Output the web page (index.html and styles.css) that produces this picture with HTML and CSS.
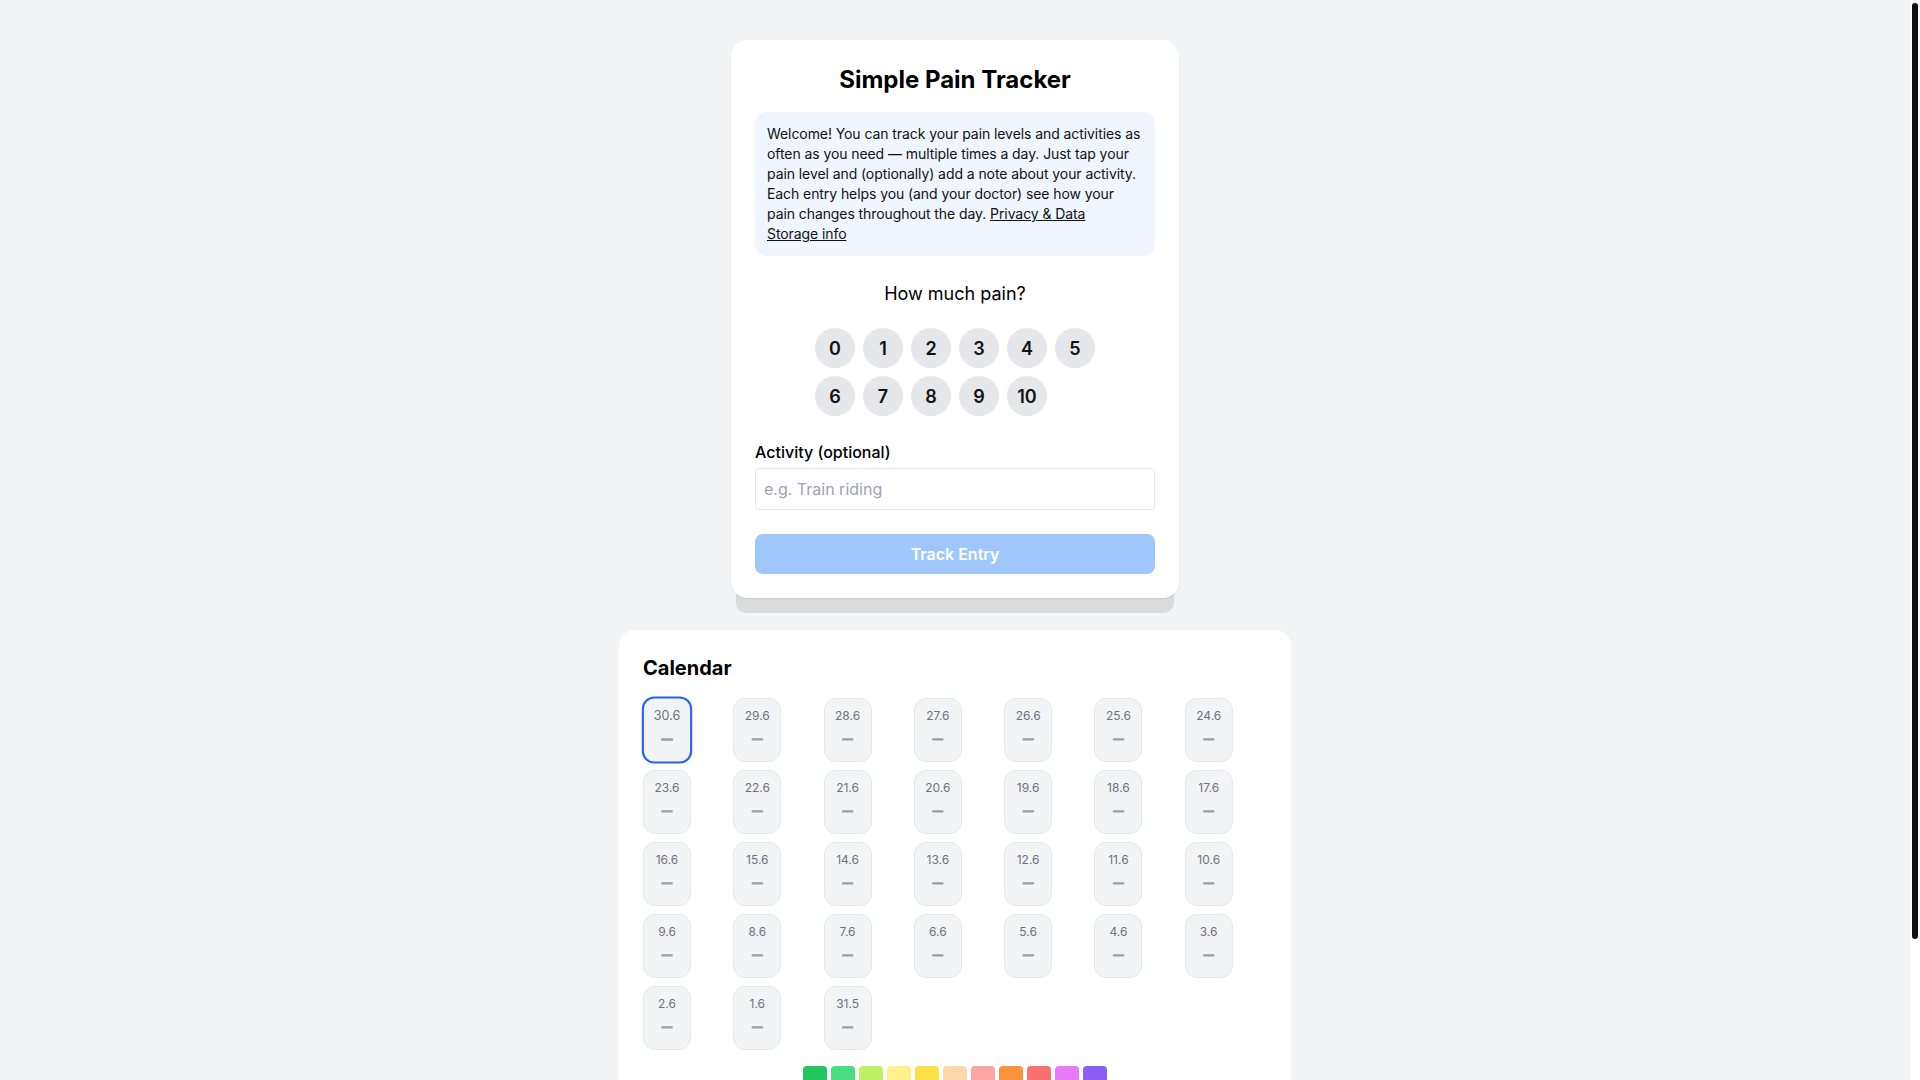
FILE: index.html
```html
<!DOCTYPE html>
<html lang="en">
<head>
<meta charset="utf-8">
<title>Simple Pain Tracker</title>
<link rel="stylesheet" href="styles.css">
</head>
<body>
<main class="page">
  <div class="stack">
    <section class="card tracker">
      <h1 class="title">Simple Pain Tracker</h1>
      <p class="info">Welcome! You can track your pain levels and activities as often as you need — multiple times a day. Just tap your pain level and (optionally) add a note about your activity. Each entry helps you (and your doctor) see how your pain changes throughout the day. <a href="#" class="info-link">Privacy &amp; Data<br>Storage info</a></p>
      <h2 class="question">How much pain?</h2>
      <div class="levels">
        <button class="level">0</button>
        <button class="level">1</button>
        <button class="level">2</button>
        <button class="level">3</button>
        <button class="level">4</button>
        <button class="level">5</button>
        <button class="level">6</button>
        <button class="level">7</button>
        <button class="level">8</button>
        <button class="level">9</button>
        <button class="level">10</button>
      </div>
      <label class="label" for="activity">Activity (optional)</label>
      <input class="input" id="activity" type="text" placeholder="e.g. Train riding">
      <button class="track" disabled>Track Entry</button>
    </section>
  </div>

  <section class="card calendar">
    <h2 class="cal-title">Calendar</h2>
    <div class="cal-grid">
      <div class="day selected"><span class="date">30.6</span><span class="dash">—</span></div>
      <div class="day"><span class="date">29.6</span><span class="dash">—</span></div>
      <div class="day"><span class="date">28.6</span><span class="dash">—</span></div>
      <div class="day"><span class="date">27.6</span><span class="dash">—</span></div>
      <div class="day"><span class="date">26.6</span><span class="dash">—</span></div>
      <div class="day"><span class="date">25.6</span><span class="dash">—</span></div>
      <div class="day"><span class="date">24.6</span><span class="dash">—</span></div>
      <div class="day"><span class="date">23.6</span><span class="dash">—</span></div>
      <div class="day"><span class="date">22.6</span><span class="dash">—</span></div>
      <div class="day"><span class="date">21.6</span><span class="dash">—</span></div>
      <div class="day"><span class="date">20.6</span><span class="dash">—</span></div>
      <div class="day"><span class="date">19.6</span><span class="dash">—</span></div>
      <div class="day"><span class="date">18.6</span><span class="dash">—</span></div>
      <div class="day"><span class="date">17.6</span><span class="dash">—</span></div>
      <div class="day"><span class="date">16.6</span><span class="dash">—</span></div>
      <div class="day"><span class="date">15.6</span><span class="dash">—</span></div>
      <div class="day"><span class="date">14.6</span><span class="dash">—</span></div>
      <div class="day"><span class="date">13.6</span><span class="dash">—</span></div>
      <div class="day"><span class="date">12.6</span><span class="dash">—</span></div>
      <div class="day"><span class="date">11.6</span><span class="dash">—</span></div>
      <div class="day"><span class="date">10.6</span><span class="dash">—</span></div>
      <div class="day"><span class="date">9.6</span><span class="dash">—</span></div>
      <div class="day"><span class="date">8.6</span><span class="dash">—</span></div>
      <div class="day"><span class="date">7.6</span><span class="dash">—</span></div>
      <div class="day"><span class="date">6.6</span><span class="dash">—</span></div>
      <div class="day"><span class="date">5.6</span><span class="dash">—</span></div>
      <div class="day"><span class="date">4.6</span><span class="dash">—</span></div>
      <div class="day"><span class="date">3.6</span><span class="dash">—</span></div>
      <div class="day"><span class="date">2.6</span><span class="dash">—</span></div>
      <div class="day"><span class="date">1.6</span><span class="dash">—</span></div>
      <div class="day"><span class="date">31.5</span><span class="dash">—</span></div>
    </div>
    <div class="legend">
      <span class="swatch c0"></span>
      <span class="swatch c1"></span>
      <span class="swatch c2"></span>
      <span class="swatch c3"></span>
      <span class="swatch c4"></span>
      <span class="swatch c5"></span>
      <span class="swatch c6"></span>
      <span class="swatch c7"></span>
      <span class="swatch c8"></span>
      <span class="swatch c9"></span>
      <span class="swatch c10"></span>
    </div>
  </section>
</main>
<div class="scrollbar"><div class="scroll-thumb"></div></div>
</body>
</html>
```

FILE: styles.css
```css
html {
  background: #f3f4f6;
}
body {
  margin: 0;
  padding-right: 10px;
  background: #f3f4f6;
  font-family: Inter, "Noto Sans", "Liberation Sans", sans-serif;
  color: #111111;
}
.scrollbar {
  position: fixed;
  top: 0;
  right: 0;
  width: 10px;
  height: 100vh;
  background: #ffffff;
  z-index: 10;
}
.scroll-thumb {
  margin: 3px 2px 0;
  width: 6px;
  height: 936px;
  background: #111111;
  border-radius: 3px;
}
.page {
  display: flex;
  flex-direction: column;
  align-items: center;
  padding: 40px 0 132px;
}
.stack {
  position: relative;
  width: 448px;
}
.stack::after {
  content: "";
  position: absolute;
  left: 5px;
  right: 5px;
  bottom: -15px;
  height: 40px;
  background: #dadbdd;
  border-radius: 0 0 10px 10px;
  box-shadow: inset 0 2px 2px rgba(0, 0, 0, 0.05);
  z-index: 0;
}
.card {
  background: #ffffff;
  border-radius: 16px;
  box-sizing: border-box;
}
.tracker {
  position: relative;
  z-index: 1;
  width: 448px;
  padding: 24px;
  display: flex;
  flex-direction: column;
  box-shadow: 0 1px 2px rgba(0, 0, 0, 0.08);
}
.title {
  margin: 0;
  font-size: 24px;
  line-height: 32px;
  font-weight: 700;
  text-align: center;
  color: #000000;
}
.info {
  margin: 16px 0 0;
  background: #eff6ff;
  border-radius: 12px;
  padding: 12px 10px 12px 12px;
  font-size: 14px;
  line-height: 20px;
  letter-spacing: -0.08px;
  color: #111111;
}
.info-link {
  color: #111111;
  text-decoration: underline;
}
.question {
  margin: 24px 0 0;
  font-size: 18px;
  line-height: 28px;
  font-weight: 400;
  text-align: center;
  color: #000000;
}
.levels {
  margin-top: 20px;
  display: grid;
  grid-template-columns: repeat(6, 40px);
  gap: 8px;
  justify-content: center;
}
.level {
  width: 40px;
  height: 40px;
  border: none;
  border-radius: 50%;
  background: #e5e7eb;
  font-family: Inter, "Noto Sans", sans-serif;
  font-size: 18px;
  font-weight: 600;
  color: #111111;
  padding: 0;
}
.label {
  margin-top: 24px;
  font-size: 16px;
  line-height: 24px;
  font-weight: 500;
  color: #000000;
}
.input {
  margin-top: 4px;
  height: 42px;
  box-sizing: border-box;
  border: 1px solid #e5e7eb;
  border-radius: 4px;
  padding: 8px;
  font-family: Inter, "Noto Sans", sans-serif;
  font-size: 16px;
  line-height: 24px;
  color: #111111;
  outline: none;
}
.input::placeholder {
  color: #9ca3af;
}
.track {
  margin-top: 24px;
  height: 40px;
  border: none;
  border-radius: 8px;
  background: #9fc7fb;
  color: #ffffff;
  font-family: Inter, "Noto Sans", sans-serif;
  font-size: 16px;
  font-weight: 600;
}
.calendar {
  margin-top: 32px;
  width: 672px;
  padding: 24px 24px 24px;
}
.cal-title {
  margin: 0;
  font-size: 20px;
  line-height: 28px;
  font-weight: 700;
  color: #000000;
}
.cal-grid {
  margin-top: 16px;
  display: grid;
  grid-template-columns: repeat(7, 1fr);
  gap: 8px;
}
.day {
  width: 48px;
  height: 64px;
  box-sizing: border-box;
  background: #f3f4f6;
  border: 1px solid #e5e7eb;
  border-radius: 12px;
  padding-top: 9px;
  display: flex;
  flex-direction: column;
  align-items: center;
}
.day.selected {
  border: 2px solid #2563eb;
  padding-top: 8px;
  transform: scale(1.05);
}
.date {
  font-size: 12px;
  line-height: 16px;
  color: #6b7280;
}
.dash {
  margin-top: 6px;
  font-size: 10px;
  line-height: 16px;
  font-weight: 700;
  color: #9ca3af;
  -webkit-text-stroke: 1.2px #9ca3af;
}
.legend {
  margin-top: 16px;
  display: flex;
  justify-content: center;
  gap: 4px;
}
.swatch {
  width: 24px;
  height: 24px;
  border-radius: 4px;
}
.c0 { background: #22c55e; }
.c1 { background: #4ade80; }
.c2 { background: #bef264; }
.c3 { background: #fef08a; }
.c4 { background: #fde047; }
.c5 { background: #fed7aa; }
.c6 { background: #fca5a5; }
.c7 { background: #fb923c; }
.c8 { background: #f87171; }
.c9 { background: #e879f9; }
.c10 { background: #8b5cf6; }
```
